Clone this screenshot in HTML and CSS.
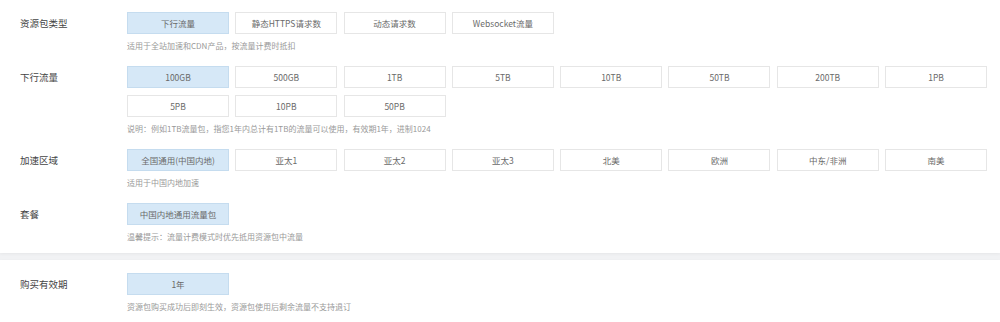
FILE: index.html
```html
<!DOCTYPE html>
<html>
  <head>
    <title>资源包购买</title>
    <meta name="viewport" content="width=device-width, initial-scale=1" />
    <link rel="stylesheet" href="styles.css">
  </head>
  <body>
    <div class="panel">
      <div class="form-row">
        <label class="row-label">资源包类型</label>
        <div class="row-body">
          <div class="options">
            <span class="option selected">下行流量</span>
            <span class="option">静态HTTPS请求数</span>
            <span class="option">动态请求数</span>
            <span class="option">Websocket流量</span>
          </div>
          <p class="hint">适用于全站加速和CDN产品，按流量计费时抵扣</p>
        </div>
      </div>

      <div class="form-row">
        <label class="row-label">下行流量</label>
        <div class="row-body">
          <div class="options">
            <span class="option selected">100GB</span>
            <span class="option">500GB</span>
            <span class="option">1TB</span>
            <span class="option">5TB</span>
            <span class="option">10TB</span>
            <span class="option">50TB</span>
            <span class="option">200TB</span>
            <span class="option">1PB</span>
            <span class="option">5PB</span>
            <span class="option">10PB</span>
            <span class="option">50PB</span>
          </div>
          <p class="hint">说明：例如1TB流量包，指您1年内总计有1TB的流量可以使用，有效期1年，进制1024</p>
        </div>
      </div>

      <div class="form-row">
        <label class="row-label">加速区域</label>
        <div class="row-body">
          <div class="options">
            <span class="option selected">全国通用(中国内地)</span>
            <span class="option">亚太1</span>
            <span class="option">亚太2</span>
            <span class="option">亚太3</span>
            <span class="option">北美</span>
            <span class="option">欧洲</span>
            <span class="option">中东/非洲</span>
            <span class="option">南美</span>
          </div>
          <p class="hint">适用于中国内地加速</p>
        </div>
      </div>

      <div class="form-row">
        <label class="row-label">套餐</label>
        <div class="row-body">
          <div class="options">
            <span class="option selected">中国内地通用流量包</span>
          </div>
          <p class="hint">温馨提示：流量计费模式时优先抵用资源包中流量</p>
        </div>
      </div>
    </div>

    <div class="panel panel-bottom">
      <div class="form-row">
        <label class="row-label">购买有效期</label>
        <div class="row-body">
          <div class="options">
            <span class="option selected">1年</span>
          </div>
          <p class="hint">资源包购买成功后即刻生效，资源包使用后剩余流量不支持退订</p>
        </div>
      </div>
    </div>
  </body>
</html>
```

FILE: styles.css
```css
* {
  padding: 0;
  margin: 0;
  box-sizing: border-box;
  font-family: "Noto Sans CJK SC", "Noto Sans", sans-serif;
}
body {
  background-color: #f1f2f4;
}
.panel {
  background-color: #ffffff;
  padding: 12px 0 10px 20px;
  box-shadow: 0 1px 3px rgba(0, 0, 0, 0.05);
}
.panel-bottom {
  margin-top: 7px;
  padding-top: 13px;
  padding-bottom: 14px;
}
.form-row {
  display: flex;
  margin-bottom: 14px;
}
.form-row:last-child {
  margin-bottom: 0;
}
.row-label {
  width: 107px;
  flex-shrink: 0;
  font-size: 9.5px;
  line-height: 22px;
  color: #444444;
}
.row-body {
  flex: 1;
}
.options {
  display: grid;
  grid-template-columns: repeat(8, 102px);
  gap: 7px 6.3px;
}
.option {
  display: block;
  height: 22px;
  line-height: 20px;
  text-align: center;
  font-size: 8.5px;
  color: #6a6a6a;
  border: 1px solid #e6e6e6;
  background-color: #ffffff;
  white-space: nowrap;
}
.option.selected {
  background-color: #d6e8f7;
  border-color: #c5dcef;
}
.hint {
  margin-top: 5px;
  font-size: 8px;
  line-height: 13px;
  color: #999999;
}
```
